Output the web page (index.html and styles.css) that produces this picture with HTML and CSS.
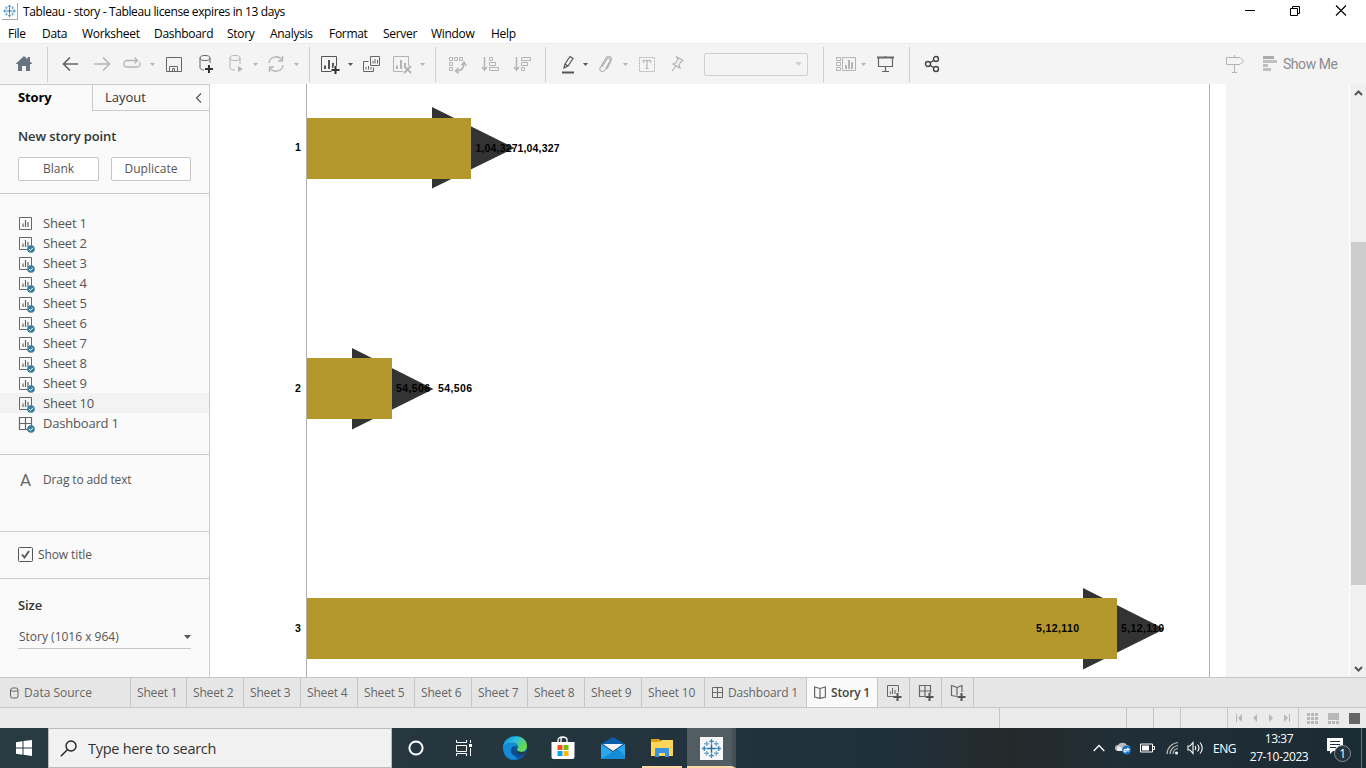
FILE: index.html
```html
<!DOCTYPE html>
<html lang="en">
<head>
<meta charset="utf-8">
<title>Tableau - story</title>
<link rel="stylesheet" href="styles.css">
</head>
<body>
<svg class="defs" aria-hidden="true">
  <symbol id="sheet" viewBox="0 0 18 18"><path d="M1.5 1.5h12v12h-12z" fill="none" stroke="#666"/><path d="M5 11V7.500M7.500 11V4M10 11V6" stroke="#666" stroke-width="1.200"/></symbol>
  <symbol id="grid" viewBox="0 0 18 18"><path d="M1.500 1.500h12v12h-12zM7.500 1.500v12M1.500 7.500h12" fill="none" stroke="#666" stroke-width="1.200"/></symbol>
  <symbol id="check" viewBox="0 0 8 8"><circle cx="4" cy="4" r="3.800" fill="#37809f"/><path d="M2 4l1.500 1.500L6 2.800" fill="none" stroke="#fff"/></symbol>
  <symbol id="caret" viewBox="0 0 5 3"><path d="M0 0h5L2.500 3z" fill="currentColor"/></symbol>
  <symbol id="chart" viewBox="0 0 16 16"><path d="M.500.500h15v15H.500z" fill="none" stroke="currentColor"/><path d="M4 13V9.500M8 13V4M12 13V7" stroke="currentColor" stroke-width="2"/></symbol>
  <symbol id="tableau" viewBox="0 0 24 24"><path d="M12 7.500v9M7.500 12h9" stroke="#246fa8" stroke-width="1.500"/><path d="M12 2v5M9.500 4.500h5M12 17v5M9.500 19.500h5M2 12h5M4.500 9.500v5M17 12h5M19.500 9.500v5" stroke="#3f88b7" stroke-width="1.400"/><path d="M7 4.500v5M4.500 7h5M17 4.500v5M14.500 7h5M7 14.500v5M4.500 17h5M17 14.500v5M14.500 17h5" stroke="#76a6ca" stroke-width="1.400"/></symbol>
  <symbol id="book" viewBox="0 0 12 13"><path d="M6 2.500L.600 1v10L6 12.300l5.400-1.300V1zM6 2.500v9.800" fill="none" stroke="#666" stroke-width="1.200"/></symbol>
</svg>

<header class="titlebar">
  <svg class="appicon" width="16" height="17" viewBox="0 0 24 24"><use href="#tableau"/></svg>
  <h1>Tableau - story - Tableau license expires in 13 days</h1>
  <svg class="winctl" width="106" height="14" fill="none" stroke="#000"><path d="M1 6.500h10"/><path d="M46.500 4.500h7v7h-7zM48.500 4V2.500h7v7H54"/><path d="M92 1.500l10 10M102 1.500l-10 10" stroke-width="1.100"/></svg>
</header>

<nav class="menu"><span>File</span><span>Data</span><span>Worksheet</span><span>Dashboard</span><span>Story</span><span>Analysis</span><span>Format</span><span>Server</span><span>Window</span><span>Help</span></nav>

<div class="toolbar">
  <svg class="home" width="18" height="18" viewBox="0 0 18 18" fill="#687482"><path d="M9 1L.500 9H3v7h4v-5h4v5h4V9h2.500L15 6.500V2h-2.500v2.300z"/></svg>
  <i class="sep"></i>
  <svg width="17" height="16" fill="none" stroke="#666" stroke-width="1.700"><path d="M16 8H1M8 1.500L1.500 8 8 14.500"/></svg>
  <svg width="17" height="16" fill="none" stroke="#b4b4b4" stroke-width="1.500"><path d="M0 8h15M9 1.500L15.500 8 9 14.500"/></svg>
  <svg width="20" height="16" fill="none" stroke="#b4b4b4" stroke-width="1.300"><path d="M11 4.500H5a3 3.200 0 0 0 0 6.500h10a3 3.200 0 0 0 2.500-5M8 4.500h7M12.500 1.500l3 3-3 3"/></svg>
  <svg class="dim" width="5" height="3"><use href="#caret"/></svg>
  <svg width="17" height="17" fill="none" stroke="#666"><path d="M1.500 1.500h15v14h-15zM4.500 15.500v-5h8v5M7.500 15.500v-3h2v3" /></svg>
  <svg width="16" height="20" fill="none" stroke="#666"><ellipse cx="7" cy="4" rx="5" ry="2.500"/><path d="M2 4v10c0 1 2 2 4 2M12 4v5"/><path d="M11 11v8M7 15h8" stroke="#333" stroke-width="2"/></svg>
  <svg width="16" height="20" fill="none" stroke="#b4b4b4"><ellipse cx="6" cy="4" rx="5" ry="2.500"/><path d="M1 4v10c0 1 2 2 5 2M11 4v6"/><path d="M9 12v6l5-3z" fill="#b4b4b4" stroke="none"/></svg>
  <svg class="dim" width="5" height="3"><use href="#caret"/></svg>
  <svg width="18" height="18" fill="none" stroke="#b4b4b4" stroke-width="1.300"><path d="M2 8a7 6.500 0 0 1 13-3M16 10a7 6.500 0 0 1-13 3M15.500 1v5h-4.500M2.500 17v-5H7"/></svg>
  <svg class="dim" width="5" height="3"><use href="#caret"/></svg>
  <i class="sep"></i>
  <svg class="dark" width="20" height="20"><use href="#chart" x="1" y="2" width="16" height="16"/><path d="M15.500 12v8M11.500 16h8" stroke="#f4f4f4" stroke-width="4"/><path d="M15.500 12v8M11.500 16h8" stroke="#333" stroke-width="2"/></svg>
  <svg class="dark" width="5" height="3"><use href="#caret"/></svg>
  <svg class="dark" width="18" height="18" fill="none" stroke="#666"><path d="M7.500 1.500h9v9h-9zM10 8.500V6M12 8.500V4M14.500 8.500V5M5.500 6.500h-5v10h10v-4M3 14.500V12M5.500 14.500V11M8 14.500V12"/></svg>
  <svg class="dim" width="20" height="20"><use href="#chart" x="1" y="2" width="16" height="16"/><path d="M11 12h9v8h-9z" fill="#f4f4f4"/><path d="M12 12l7 7M19 12l-7 7" stroke="#b4b4b4" stroke-width="2"/></svg>
  <svg class="dim" width="5" height="3"><use href="#caret"/></svg>
  <i class="sep"></i>
  <svg width="19" height="19" fill="none" stroke="#b4b4b4"><path d="M1.500 2.500h3v3h-3zM6.500 2.500h3v3h-3zM11.500 2.500h3v3h-3zM1.500 7.500h3v3h-3zM1.500 12.500h3v3h-3z"/><path d="M16 8c0 5-3 8-8 8M13.500 10.500L16 7l2.500 3.500M10.500 13L7.500 16l3 2.500" stroke-width="1.500"/></svg>
  <svg width="19" height="18" fill="none" stroke="#b4b4b4"><path d="M3.500 2v13M1 12l2.500 3L6 12" stroke-width="1.500"/><path d="M8.500 2.500h3v3h-3zM8.500 7.500h6v3h-6zM8.500 12.500h9v3h-9z"/></svg>
  <svg width="19" height="18" fill="none" stroke="#b4b4b4"><path d="M3.500 2v13M1 12l2.500 3L6 12" stroke-width="1.500"/><path d="M8.500 2.500h9v3h-9zM8.500 7.500h6v3h-6zM8.500 12.500h3v3h-3z"/></svg>
  <i class="sep"></i>
  <svg width="14" height="19" fill="none" stroke="#555"><path d="M3 13l1-4L9 1.500l3 2L7 11zM4 9l3 2" stroke-width="1.200"/><path d="M1 17.500h12" stroke-width="2"/></svg>
  <svg class="dark" width="5" height="3"><use href="#caret"/></svg>
  <svg width="16" height="18" fill="none" stroke="#b4b4b4" stroke-width="1.200"><path d="M4 12l5-8c1-2 4 0 3 2l-5 9c-2 3-6 1-5-2l6-10c2-3 7-1 5 3l-4 8"/></svg>
  <svg class="dim" width="5" height="3"><use href="#caret"/></svg>
  <svg width="18" height="18" fill="none" stroke="#b4b4b4"><path d="M1.500 2.500h15v14h-15z" stroke-dasharray="2 1"/><path d="M5.500 8V5.500h7V8M9 5.500v8M7.500 13.500h3" stroke-width="1.200"/></svg>
  <svg width="16" height="18" fill="none" stroke="#b4b4b4" stroke-width="1.200"><path d="M6 1.500l7 4-1 1h-1L9 10l1 3-7-4 1-1h2l2-4zM6 11l-4 5"/></svg>
  <div class="select"><svg class="light" width="7" height="4" viewBox="0 0 5 3"><use href="#caret"/></svg></div>
  <i class="sep"></i>
  <svg class="dim" width="22" height="18" fill="none" stroke="#b4b4b4"><path d="M1.500 2.500h4v3h-4zM1.500 7.500h4v3h-4zM1.500 12.500h4v3h-4zM7.500 2.500h13v13h-13z"/><path d="M11 14v-4M14 14V5M17 14V7" stroke-width="2"/></svg>
  <svg class="dim" width="5" height="3"><use href="#caret"/></svg>
  <svg width="18" height="18" fill="none" stroke="#666" stroke-width="1.200"><path d="M0 2.500h17" stroke-width="2"/><path d="M1.500 3v8.500h14V3M8.500 1v1M8.500 12v4M5 16.500h7"/></svg>
  <i class="sep"></i>
  <svg width="16" height="18" fill="none" stroke="#444" stroke-width="1.400"><circle cx="4" cy="9" r="2.500"/><circle cx="12" cy="4" r="2.500"/><circle cx="12" cy="14" r="2.500"/><path d="M6 8l4-3M6 10l4 3"/></svg>
  <svg width="18" height="20" fill="none" stroke="#b4b4b4"><path d="M.500 3.500H14l3.500 3.500-3.500 3.500H.500zM8.500 1v2M8.500 11v7M6 18.500h5"/></svg>
  <svg class="showicon" width="15" height="16"><path d="M0 0h11v3H0z" fill="#acacac"/><path d="M0 4h14v3H0zM0 8h5v3H0zM0 12h8v3H0z" fill="#c0c0c0"/></svg>
  <span class="showme">Show Me</span>
</div>

<main class="main">
  <aside class="side">
    <div class="panetabs"><b>Story</b><div>Layout<svg width="7" height="10" fill="none" stroke="#555" stroke-width="1.200"><path d="M6 .500L1.500 5 6 9.500"/></svg></div></div>
    <section class="newpoint"><h2>New story point</h2><div class="btns"><button>Blank</button><button>Duplicate</button></div></section>
    <ul class="sheets">
      <li><svg width="18" height="18"><use href="#sheet"/></svg>Sheet 1</li>
      <li><svg width="18" height="18"><use href="#sheet"/><use href="#check" x="9" y="9" width="8" height="8"/></svg>Sheet 2</li>
      <li><svg width="18" height="18"><use href="#sheet"/><use href="#check" x="9" y="9" width="8" height="8"/></svg>Sheet 3</li>
      <li><svg width="18" height="18"><use href="#sheet"/><use href="#check" x="9" y="9" width="8" height="8"/></svg>Sheet 4</li>
      <li><svg width="18" height="18"><use href="#sheet"/><use href="#check" x="9" y="9" width="8" height="8"/></svg>Sheet 5</li>
      <li><svg width="18" height="18"><use href="#sheet"/><use href="#check" x="9" y="9" width="8" height="8"/></svg>Sheet 6</li>
      <li><svg width="18" height="18"><use href="#sheet"/><use href="#check" x="9" y="9" width="8" height="8"/></svg>Sheet 7</li>
      <li><svg width="18" height="18"><use href="#sheet"/><use href="#check" x="9" y="9" width="8" height="8"/></svg>Sheet 8</li>
      <li><svg width="18" height="18"><use href="#sheet"/><use href="#check" x="9" y="9" width="8" height="8"/></svg>Sheet 9</li>
      <li class="hover"><svg width="18" height="18"><use href="#sheet"/><use href="#check" x="9" y="9" width="8" height="8"/></svg>Sheet 10</li>
      <li><svg width="18" height="18"><use href="#grid"/><use href="#check" x="9" y="9" width="8" height="8"/></svg>Dashboard 1</li>
    </ul>
    <section class="drag"><span class="glyph">A</span><span>Drag to add text</span></section>
    <section class="showtitle"><svg width="15" height="15" fill="none" stroke="#555"><rect x=".5" y=".5" width="14" height="14" rx="1"/><path d="M4 7.500l2.500 3 4.500-6.500" stroke-width="1.800"/></svg><span>Show title</span></section>
    <section class="size"><h2>Size</h2><div class="sizesel"><span>Story (1016 x 964)</span><svg class="dark" width="7" height="4" viewBox="0 0 5 3" preserveAspectRatio="none"><use href="#caret"/></svg></div></section>
  </aside>
  <div class="canvas">
    <svg class="viz" width="1016" height="593" viewBox="210 84 1016 593">
      <path d="M306.500 84v593M1209.500 84v593" stroke="#b0b0b0"/>
      <g fill="#333"><path d="M432 107l82.500 41-82.500 40.500zM352 348l81.500 41-81.500 40.500zM1083 588l81.500 41-81.500 40.500z"/></g>
      <g fill="#b4982c"><path d="M307 118h164v61H307zM307 358h85v61h-85zM307 598h810v61H307z"/></g>
      <g class="marks">
        <text x="295" y="151">1</text><text x="295" y="392">2</text><text x="295" y="632">3</text>
        <text x="475.500" y="152" textLength="42">1,04,327</text><text x="517.500" y="152" textLength="42">1,04,327</text>
        <text x="396" y="392" textLength="34">54,506</text><text x="438" y="392" textLength="34">54,506</text>
        <text x="1036" y="632" textLength="43">5,12,110</text><text x="1121" y="632" textLength="43">5,12,110</text>
      </g>
    </svg>
  </div>
  <div class="scroll">
    <svg width="9" height="6"><path d="M1 5l3.500-3.500L8 5" fill="none" stroke="#555" stroke-width="2"/></svg>
    <div class="thumb"></div>
    <svg width="9" height="6"><path d="M1 1l3.500 3.500L8 1" fill="none" stroke="#555" stroke-width="2"/></svg>
  </div>
</main>

<nav class="tabs">
  <span class="ds"><svg width="9" height="12" fill="none" stroke="#666"><rect x=".5" y="1" width="7.500" height="10" rx="2"/><path d="M.500 3.500c2 1 5.500 1 7.500 0"/></svg>Data Source</span>
  <span>Sheet 1</span><span>Sheet 2</span><span>Sheet 3</span><span>Sheet 4</span><span>Sheet 5</span><span>Sheet 6</span><span>Sheet 7</span><span>Sheet 8</span><span>Sheet 9</span><span>Sheet 10</span>
  <span class="dash"><svg width="12" height="12" fill="none" stroke="#666"><path d="M.500 .500h10v10H.500zM5.500 .500v10M.500 5.500h10"/></svg>Dashboard 1</span>
  <span class="active"><svg width="12" height="13"><use href="#book"/></svg>Story 1</span>
  <span class="add"><svg width="16" height="16"><path d="M8 11.500H1.500v-11h11V7M4.500 9V6.500M6.500 9V3M9 9V5" fill="none" stroke="#666"/><path d="M11.500 8v8M7.500 12h8" stroke="#555" stroke-width="2"/></svg></span>
  <span class="add"><svg width="16" height="16"><path d="M7 11.500H1.500v-11h11V8M7 .500v11M1.500 6h11" fill="none" stroke="#666" stroke-width="1.200"/><path d="M11.500 8v8M7.500 12h8" stroke="#555" stroke-width="2"/></svg></span>
  <span class="add"><svg width="16" height="16"><path d="M7 2.500L1.500.500v10l5.500 1M7 2.500l5-2V7M7 2.500v8" fill="none" stroke="#666" stroke-width="1.200"/><path d="M11.500 8v8M7.500 12h8" stroke="#555" stroke-width="2"/></svg></span>
</nav>

<div class="status">
  <i></i><i></i><i></i><i></i>
  <div class="pager"><svg width="55" height="8" fill="#b8b8b8"><path d="M0 0h1v8H0zM6 0v8L2 4zM21 0v8l-4-4zM33 0v8l4-4zM48 0v8l4-4zM53 0h1v8h-1z"/></svg></div>
  <div class="views">
    <svg width="11" height="11" fill="#b8b8b8"><path d="M0 0h3v3H0zM4 0h3v3H4zM8 0h3v3H8zM0 4h3v3H0zM4 4h3v3H4zM8 4h3v3H8zM0 8h3v3H0zM4 8h3v3H4zM8 8h3v3H8z"/></svg>
    <svg width="11" height="11" fill="#b8b8b8"><path d="M0 0h11v7H0zM0 8h3v3H0zM4 8h3v3H4zM8 8h3v3H8z"/></svg>
    <svg width="11" height="11"><path d="M0 0h11v11H0z" fill="#666"/></svg>
  </div>
</div>

<footer class="taskbar">
  <div class="start"><svg width="16" height="16" fill="#fff"><path d="M0 2.300l6.500-1V7.500H0zM7.500 1.100L16 0v7.500H7.500zM0 8.500h6.500v6.200L0 13.800zM7.500 8.500H16V16l-8.500-1.200z"/></svg></div>
  <div class="search"><svg width="17" height="17" fill="none" stroke="#222" stroke-width="1.400"><circle cx="11" cy="6" r="5"/><path d="M7.300 9.700L.800 16.200"/></svg><span>Type here to search</span></div>
  <div class="apps">
    <div class="cortana"><svg width="16" height="16"><circle cx="8" cy="8" r="6.600" fill="none" stroke="#fff" stroke-width="2"/></svg></div>
    <div class="tasks"><svg width="18" height="16" fill="none" stroke="#fff"><path d="M1.500 0v2.500h10V0M1.500 5.500h10v6h-10zM1.500 16v-2.500h10V16M15.500 0v3M15.500 8v8"/><path d="M14 4h3v3h-3z" fill="#fff" stroke="none"/></svg></div>
    <div><svg width="24" height="24"><defs><linearGradient id="e" x1="0" y1="0" x2="1" y2=".5"><stop stop-color="#168bd5"/><stop offset=".5" stop-color="#29bedf"/><stop offset="1" stop-color="#6bdd45"/></linearGradient></defs><circle cx="12" cy="12" r="12" fill="#0c59a4"/><path d="M0 11C1-3 24-3 24 10c0 5-5 7-9 5-2-1 0-2 0-4 0-5-10-6-15 0z" fill="url(#e)"/><path d="M0 11c4-6 14-5 14-1-5 0-6 8 1 13C7 26 0 21 0 11z" fill="#168bd5"/><path d="M12 10c-2 3-1 9 10 7-5 7-15 3-14-3 0-3 2-4 4-4z" fill="#0c4c91"/><path d="M13 12c-1 3 4 5 10 4l-1 2c-6 1-10-1-9-6z" fill="#263840"/></svg></div>
    <div class="store"><svg width="24" height="24"><path d="M7 7V4c0-4 9-4 9 0v3M10 6V3c1-3 6-2 6 1" fill="none" stroke="#fff" stroke-width="1.300"/><path d="M.500 6h23v15q0 2-2 2h-19q-2 0-2-2z" fill="#fff"/><path d="M6.500 9h5v5h-5z" fill="#f25022"/><path d="M12.500 9h5v5h-5z" fill="#7fba00"/><path d="M6.500 15h5v5h-5z" fill="#00a4ef"/><path d="M12.500 15h5v5h-5z" fill="#ffb900"/></svg></div>
    <div><svg width="24" height="24"><path d="M0 8l12-7 12 7v5H0z" fill="#0b5cad"/><path d="M0 8l12 8L24 8v15H0z" fill="#28a8ea"/><path d="M0 23l17-10 7 7v3z" fill="#168bd8"/><path d="M2 8h20l-10 7z" fill="#f2f2f2"/></svg></div>
    <div class="run"><svg width="22" height="20"><path d="M0 1h8l2 2v5H0z" fill="#e0a010"/><path d="M0 4h8l3-2h11v16H0z" fill="#ffd65a"/><path d="M4 11q0-1 1-1h12q1 0 1 1v8h-4v-4H8v4H4z" fill="#3994de"/></svg></div>
    <div class="run on"><svg width="23" height="23" viewBox="0 0 24 24"><path d="M0 0h24v24H0z" fill="#f7f7f7"/><use href="#tableau"/></svg></div>
  </div>
  <div class="tray">
    <svg class="up" width="12" height="8"><path d="M.700 7L6 1.500 11.300 7" fill="none" stroke="#fff" stroke-width="1.300"/></svg>
    <svg class="cloud" width="17" height="15"><path d="M3 10a3 3 0 0 1 0-6 5 4 0 0 1 9 0 4 3 0 0 1 2 5z" fill="#bbb"/><path d="M3 10a3 3 0 0 1 1-5l7 5z" fill="#eee"/><circle cx="11.500" cy="9" r="4.500" fill="#1976c9"/><path d="M8.800 8.500h5l-1.500-1.500M14 10H9l1.500 1.500" fill="none" stroke="#fff" stroke-width="1.100"/></svg>
    <svg class="bat" width="16" height="10"><path d="M.500 1h12v8H.500zM13 3.500h1.500v3H13" fill="none" stroke="#fff"/><path d="M2 2.500h7v5H2z" fill="#fff"/></svg>
    <svg class="wifi" width="13" height="14" fill="none" stroke="#bbb" stroke-width="1.200"><path d="M1 13A12 12 0 0 1 12 1.500M4 13a9 9 0 0 1 8-8.500M7 13a6 6 0 0 1 5-5.500"/><circle cx="10.500" cy="12" r="1.500" fill="#fff" stroke="none"/></svg>
    <svg class="vol" width="17" height="14" fill="none" stroke="#fff" stroke-width="1.100"><path d="M1 5h2l3-3.500v11L3 9H1zM8 5q1.500 2 0 4M10.500 3.500q3 3.500 0 7M13 1.500q4.500 5.500 0 11"/></svg>
    <span class="lang">ENG</span>
    <div class="clock"><span>13:37</span><span>27-10-2023</span></div>
    <svg class="note" width="25" height="26"><path d="M0 1h16v13H6l-3 3v-3H0z" fill="#fff"/><path d="M3 4.500h10M3 7.500h10M3 10.500h6" stroke="#233039"/><circle cx="15.500" cy="16.500" r="8" fill="#25333b" stroke="#889096"/><text x="12.300" y="21">1</text></svg>
    <i class="peek"></i>
  </div>
</footer>
</body>
</html>
```
FILE: styles.css
```css
* { box-sizing: border-box; }
body { margin: 0; width: 1366px; height: 768px; overflow: hidden; background: #fff; font-family: "Open Sans", sans-serif; display: flex; flex-direction: column; }
svg { display: block; flex: none; }
h1, h2, ul { margin: 0; padding: 0; font-weight: normal; }
.defs { position: absolute; width: 0; height: 0; }
.dim { color: #b4b4b4; }
.light { color: #d0d0d0; }
.dark { color: #555; }

.titlebar { flex: none; height: 23px; display: flex; align-items: center; padding: 0 16px 0 2px; color: #000; }
.appicon { border-right: 1px solid #aaa; border-bottom: 1px solid #aaa; }
.titlebar h1 { margin-left: 5px; font-size: 12px; letter-spacing: -.38px; white-space: nowrap; }
.winctl { margin: -2px 0 0 auto; }

.menu { flex: none; height: 20px; display: grid; grid-template-columns: 34px 40px 72px 73px 43px 59px 54px 48px 60px 40px; padding-left: 8px; align-items: center; font-size: 12px; letter-spacing: -.3px; white-space: nowrap; }

.toolbar { flex: none; height: 41px; background: #f4f4f4; border-top: 1px solid #ececec; display: grid; align-items: center; padding-left: 15px;
  grid-template-columns: 32px 15px 32px 28px 28px 15px 33px 31px 24px 14px 27px 15px 11px 28px 15px 29px 28px 15px 13px 33px 32px 32px 16px 22px 15px 25px 15px 32px 34px 119px 12px 26px 16px 32px 15px 302px 37px 20px 70px; }
.sep { width: 1px; height: 35px; background: #cfcfcf; align-self: end; margin-bottom: 2px; }
.select { width: 104px; height: 23px; border: 1px solid #d0d0d0; border-radius: 2px; display: flex; align-items: center; justify-content: flex-end; padding-right: 5px; }
.showme { font: 14px Roboto, sans-serif; letter-spacing: -.45px; color: #8c8c8c; white-space: nowrap; }

.main { flex: none; height: 593px; display: flex; }
.side { width: 210px; background: #fafafa; border-top: 1px solid #ccc; border-right: 1px solid #ccc; font-size: 12px; color: #555; }
.panetabs { display: flex; height: 26px; font-size: 13px; line-height: 25px; }
.panetabs b { width: 92px; padding-left: 18px; color: #000; letter-spacing: -.1px; }
.panetabs div { flex: 1; border-left: 1px solid #ccc; border-bottom: 1px solid #ccc; padding: 0 7px 0 12px; display: flex; justify-content: space-between; align-items: center; color: #333; }
.side h2 { font-size: 13px; font-weight: 600; color: #333; line-height: 18px; letter-spacing: -.12px; }
.newpoint { height: 83px; border-bottom: 1px solid #ccc; padding: 16px 18px 0; }
.btns { display: flex; justify-content: space-between; margin-top: 12px; }
.btns button { width: 81px; height: 24px; padding: 0 0 2px; border: 1px solid #c6c6c6; border-radius: 2px; background: #fff; color: #555; font: 12px "Open Sans", sans-serif; }
.btns button + button { width: 80px; }
.sheets { list-style: none; height: 261px; border-bottom: 1px solid #ccc; padding-top: 19px; font-size: 13px; letter-spacing: -.2px; }
.sheets li { height: 20px; display: flex; align-items: center; padding-left: 18px; gap: 7px; }
.sheets svg { margin-top: 3px; }
.sheets .hover { background: #f3f3f3; }
.drag { height: 77px; border-bottom: 1px solid #ccc; padding: 15px 0 0 20px; display: flex; gap: 13px; line-height: 20px; letter-spacing: -.13px; }
.glyph { width: 10px; font: 17px/20px Roboto, sans-serif; color: #666; }
.showtitle { height: 47px; border-bottom: 1px solid #ccc; padding: 0 0 1px 18px; display: flex; align-items: center; gap: 5px; letter-spacing: -.1px; }
.size { padding: 17px 18px 0; }
.sizesel { height: 24px; margin-top: 11px; border-bottom: 1px solid #c6c6c6; padding-left: 1px; display: flex; align-items: center; justify-content: space-between; }

.canvas { width: 1140px; background: #f4f4f4; border-right: 1px solid #fff; }
.viz { background: #fff; }
.marks { font: bold 10.500px "Liberation Sans", Arial, sans-serif; fill: #000; }
.scroll { width: 16px; background: #f0f0f0; display: flex; flex-direction: column; align-items: center; padding: 6px 0 5px; }
.thumb { width: 15px; height: 343px; margin: 146px 0 auto; background: #cdcdcd; }

.tabs { flex: none; height: 31px; background: #e6e6e6; border-top: 1px solid #c6c6c6; border-bottom: 1px solid #c6c6c6; display: grid; grid-template-columns: 131px 56px 57px 57px 57px 57px 57px 56px 57px 57px 63px 102px 71px 32px 32px 32px; font-size: 12px; color: #666; }
.tabs span { border-right: 1px solid #c6c6c6; display: flex; align-items: center; padding-left: 6px; gap: 4px; white-space: nowrap; letter-spacing: -.18px; }
.tabs .ds { padding-left: 10px; gap: 5px; letter-spacing: 0; }
.tabs .active { background: #fafafa; color: #444; font-weight: 600; gap: 5px; padding-left: 7px; }
.tabs .dash { padding-left: 7px; }
.tabs .add { padding-left: 8px; }

.status { flex: none; height: 20px; background: #ebebeb; display: grid; grid-template-columns: 1000px 127px 27px 27px 118px 67px; }
.status i { border-right: 1px solid #c6c6c6; }
.pager { border-right: 1px solid #c6c6c6; display: flex; align-items: center; position: relative; padding-left: 55px; }
.pager::before { content: ""; position: absolute; left: 46px; top: 0; height: 20px; border-left: 1px solid #c6c6c6; }
.views { display: flex; align-items: center; gap: 10px; padding-left: 8px; }

.taskbar { flex: none; height: 40px; background: linear-gradient(90deg, #283a42 0, #26363f 500px, #20303a 900px, #25292b 1010px, #202f37 1130px, #1b2b34 1366px); display: flex; }
.start { width: 48px; display: flex; align-items: center; justify-content: center; }
.search { width: 344px; background: #f2f2f2; border: 1px solid #bbb; display: flex; align-items: center; padding-left: 11px; gap: 11px; font-size: 14.500px; color: #333; letter-spacing: -.28px; }
.apps { display: grid; grid-template-columns: repeat(7, 49px); }
.apps div { display: flex; align-items: center; justify-content: center; }
.apps .cortana { padding-right: 2px; }
.apps .tasks { padding-right: 4px; }
.apps .store { padding-right: 1px; }
.apps .run { border-bottom: 2px solid #fdd9a5; margin: 0 4px 0 5px; padding-top: 2px; }
.apps .on { margin: 0 -1px 0 1px; background: #525d63; border-right: 4px solid #434f55; padding-left: 3px; }
.tray { flex: 1; display: flex; align-items: center; color: #fff; font-size: 12px; }
.up { margin-left: 358px; }
.cloud { margin-left: 10px; }
.bat { margin-left: 8px; }
.wifi { margin-left: 10px; }
.vol { margin-left: 8px; }
.lang { margin-left: 9px; width: 24px; letter-spacing: -.5px; }
.clock { margin-left: 10px; width: 64px; display: flex; flex-direction: column; align-items: center; line-height: 18px; letter-spacing: -.4px; white-space: nowrap; }
.note { margin: 4px 0 0 16px; font: 12px "Open Sans", sans-serif; fill: #fff; }
.peek { width: 1px; height: 40px; margin: 0 4px 0 auto; background: #66727a; }
```
